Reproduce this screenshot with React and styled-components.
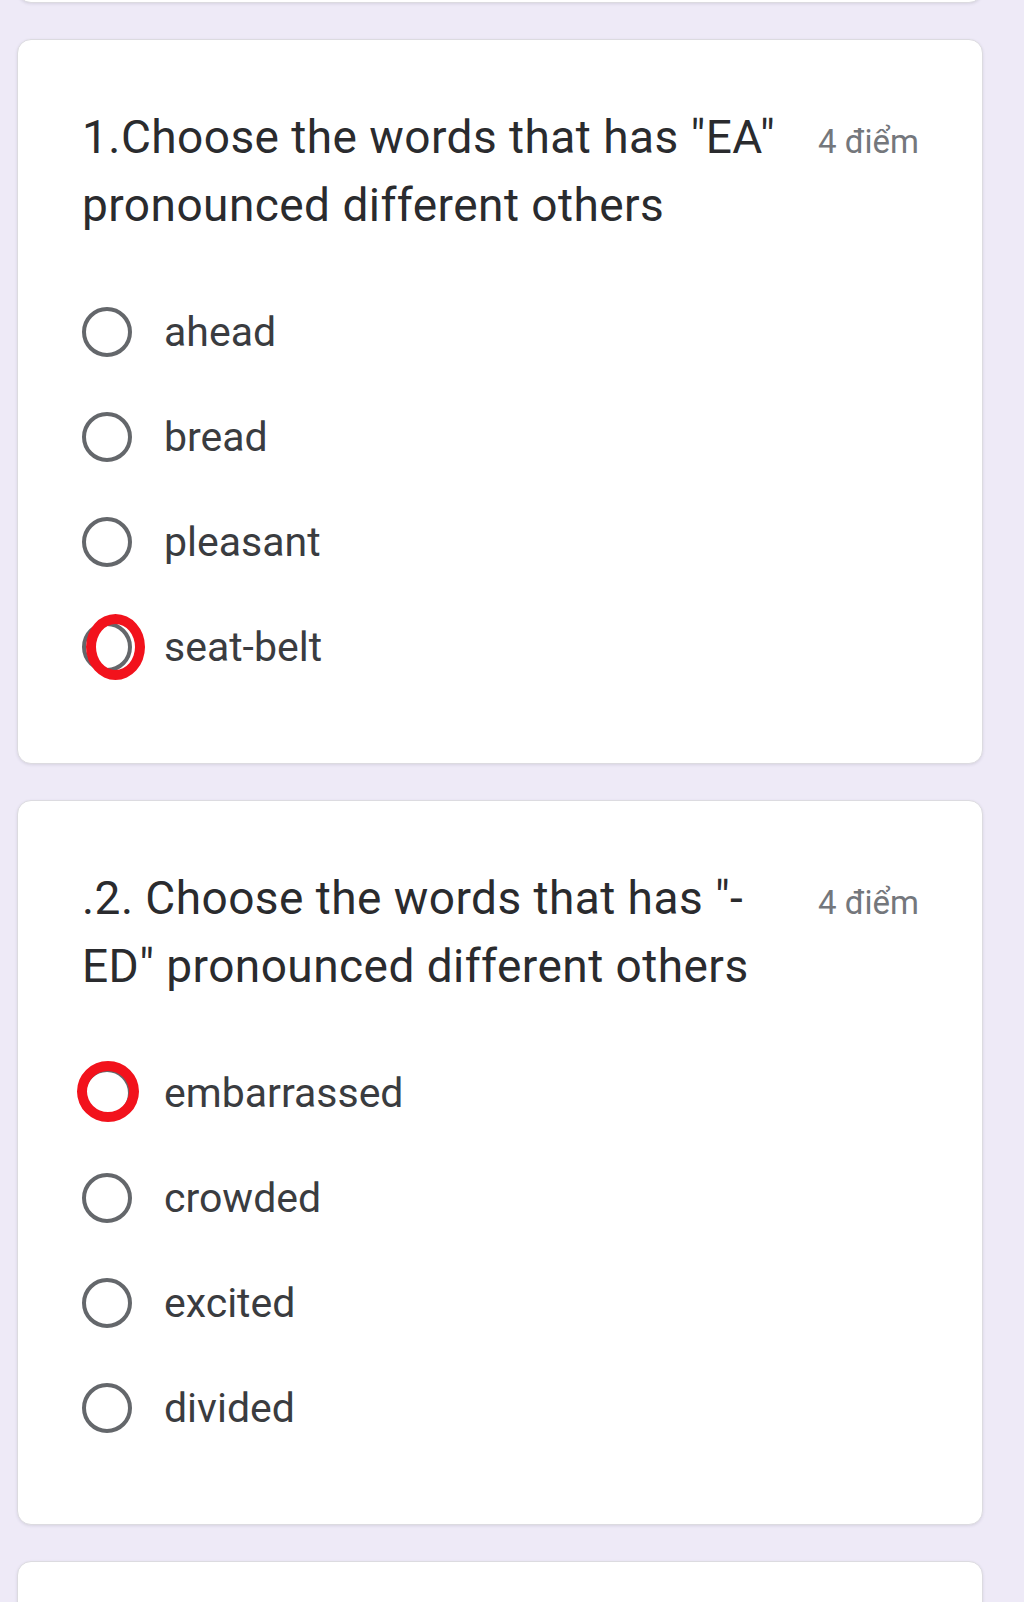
import React from "react";
import styled, { createGlobalStyle } from "styled-components";

const Global = createGlobalStyle`
  html, body { margin: 0; padding: 0; background: #eeeaf7; }
  body { font-family: Roboto, "Liberation Sans", sans-serif; }
  * { box-sizing: border-box; }
`;

const Page = styled.div`
  display: flex;
  flex-direction: column;
  gap: 36px;
  padding: 0 41px 0 17px;
  height: 1602px;
  overflow: hidden;
`;

const Card = styled.section`
  flex: 0 0 auto;
  background: #ffffff;
  border: 1px solid #dcdbe0;
  border-radius: 14px;
  box-shadow: 0 1px 3px rgba(60, 60, 80, 0.12);
  padding: 63px 63px 64px 64px;
`;

const StubCard = styled(Card)`
  margin-top: -40px;
  height: 43px;
  padding: 0;
`;

const TailCard = styled(Card)`
  height: 200px;
  padding: 0;
`;

const Header = styled.div`
  display: flex;
  align-items: baseline;
  justify-content: space-between;
  margin-bottom: 40px;
`;

const Title = styled.h2`
  margin: 0;
  width: 715px;
  font-family: Roboto, "Liberation Sans", sans-serif;
  font-weight: 400;
  font-size: 46px;
  letter-spacing: 0.45px;
  line-height: 68px;
  color: #2a2b2e;
`;

const Points = styled.span`
  font-family: Roboto, "Liberation Sans", sans-serif;
  font-size: 33px;
  color: #74777c;
  white-space: nowrap;
`;

const Options = styled.div`
  display: flex;
  flex-direction: column;
`;

const Option = styled.label`
  display: flex;
  align-items: center;
  gap: 32px;
  height: 105px;
  font-size: 41px;
  color: #3a3c40;
`;

const RadioWrap = styled.span`
  position: relative;
  flex: 0 0 50px;
  width: 50px;
  height: 50px;
`;

const Radio = styled.span`
  display: block;
  width: 50px;
  height: 50px;
  border: 4px solid #64676b;
  border-radius: 50%;
`;

const Mark = styled.span`
  position: absolute;
  left: ${(p) => 25 + p.$dx - p.$w / 2}px;
  top: ${(p) => 25 + p.$dy - p.$h / 2}px;
  width: ${(p) => p.$w}px;
  height: ${(p) => p.$h}px;
  border: 10px solid #f2121c;
  border-radius: 50%;
`;

const questions = [
  {
    title: <>1.Choose the words that has "EA" pronounced different others</>,
    options: [
      { label: "ahead" },
      { label: "bread" },
      { label: "pleasant" },
      { label: "seat-belt", mark: { dx: 8, dy: 0, w: 59, h: 66 } },
    ],
  },
  {
    title: (
      <>
        .2. Choose the words that has "-<wbr />ED" pronounced different others
      </>
    ),
    options: [
      { label: "embarrassed", mark: { dx: 1, dy: -1, w: 62, h: 61 } },
      { label: "crowded" },
      { label: "excited" },
      { label: "divided" },
    ],
  },
];

export default function App() {
  return (
    <>
      <Global />
      <Page>
        <StubCard />
        {questions.map((q, i) => (
          <Card key={i}>
            <Header>
              <Title>{q.title}</Title>
              <Points>4 điểm</Points>
            </Header>
            <Options>
              {q.options.map((o) => (
                <Option key={o.label}>
                  <RadioWrap>
                    <Radio />
                    {o.mark && (
                      <Mark $dx={o.mark.dx} $dy={o.mark.dy} $w={o.mark.w} $h={o.mark.h} />
                    )}
                  </RadioWrap>
                  {o.label}
                </Option>
              ))}
            </Options>
          </Card>
        ))}
        <TailCard />
      </Page>
    </>
  );
}
